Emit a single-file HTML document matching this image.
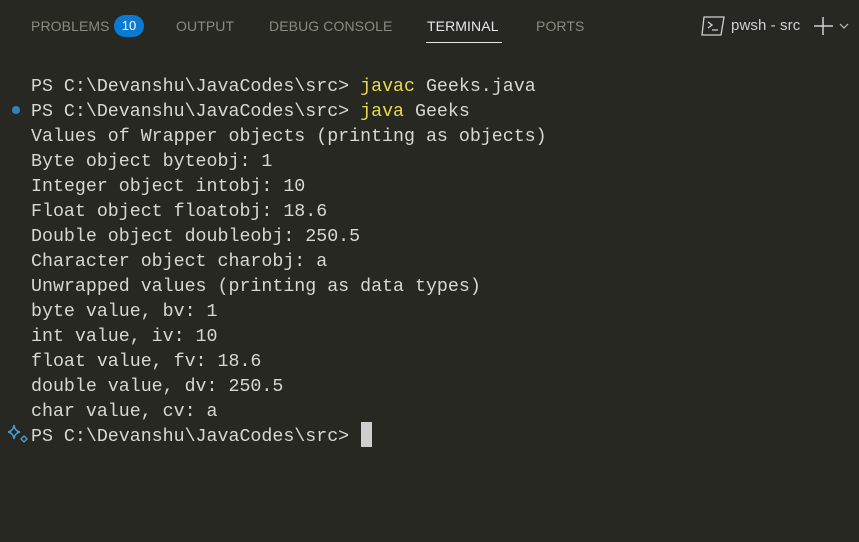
<!DOCTYPE html>
<html><head><style>
body{margin:0;width:859px;height:542px;background:#272822;overflow:hidden;position:relative;font-family:"Liberation Sans",sans-serif}
.tab{position:absolute;top:18px;font-size:14px;color:#8a8a80;letter-spacing:0.1px}
.badge{position:absolute;left:114px;top:15px;width:30px;height:22px;border-radius:11px;background:#0a7ad3;color:#fff;font-size:13px;text-align:center;line-height:22px}
pre{position:absolute;left:31px;top:75px;margin:0;font-family:"Liberation Mono",monospace;font-size:18.3px;line-height:25px;color:#d8d8d2}
.y{color:#e6db4a}
</style></head><body>
<div class="tab" style="left:31px">PROBLEMS</div>
<div class="badge">10</div>
<div class="tab" style="left:176px">OUTPUT</div>
<div class="tab" style="left:269px">DEBUG CONSOLE</div>
<div class="tab" style="left:427px;color:#e8e8e8">TERMINAL</div>
<div style="position:absolute;left:426px;top:42px;width:76px;height:1px;background:#e8e8e8"></div>
<div class="tab" style="left:536px">PORTS</div>
<svg style="position:absolute;left:701px;top:16px" width="24" height="20" viewBox="0 0 24 20"><path d="M3 1H23L20 19H1Z" fill="none" stroke="#cfcfcf" stroke-width="1.3"/><path d="M7 6L11 9L7 12M11 14H17" fill="none" stroke="#cfcfcf" stroke-width="1.3"/></svg>
<div class="tab" style="left:731px;top:17px;color:#d0d0d0;font-size:15px">pwsh - src</div>
<svg style="position:absolute;left:813px;top:16px" width="40" height="20"><path d="M10 1V19M1 10H20" stroke="#d0d0d0" stroke-width="1.5"/><path d="M27 8L31 12L35 8" fill="none" stroke="#c0c0c0" stroke-width="1.2"/></svg>
<div style="position:absolute;left:12px;top:106px;width:8px;height:8px;border-radius:50%;background:#2d86b8"></div>
<svg style="position:absolute;left:6px;top:424px" width="24" height="20" viewBox="0 0 24 20"><path d="M8 1Q8.7 7 14 8Q8.7 9 8 15Q7.3 9 2 8Q7.3 7 8 1Z" fill="none" stroke="#4a9ed8" stroke-width="1.4"/><path d="M18 12L21 15L18 18L15 15Z" fill="none" stroke="#4a9ed8" stroke-width="1.3"/></svg>
<pre>PS C:\Devanshu\JavaCodes\src&gt; <span class="y">javac</span> Geeks.java
PS C:\Devanshu\JavaCodes\src&gt; <span class="y">java</span> Geeks
Values of Wrapper objects (printing as objects)
Byte object byteobj: 1
Integer object intobj: 10
Float object floatobj: 18.6
Double object doubleobj: 250.5
Character object charobj: a
Unwrapped values (printing as data types)
byte value, bv: 1
int value, iv: 10
float value, fv: 18.6
double value, dv: 250.5
char value, cv: a
PS C:\Devanshu\JavaCodes\src&gt; </pre>
<div style="position:absolute;left:361px;top:422px;width:11px;height:25px;background:#cfcfcf"></div>
</body></html>
